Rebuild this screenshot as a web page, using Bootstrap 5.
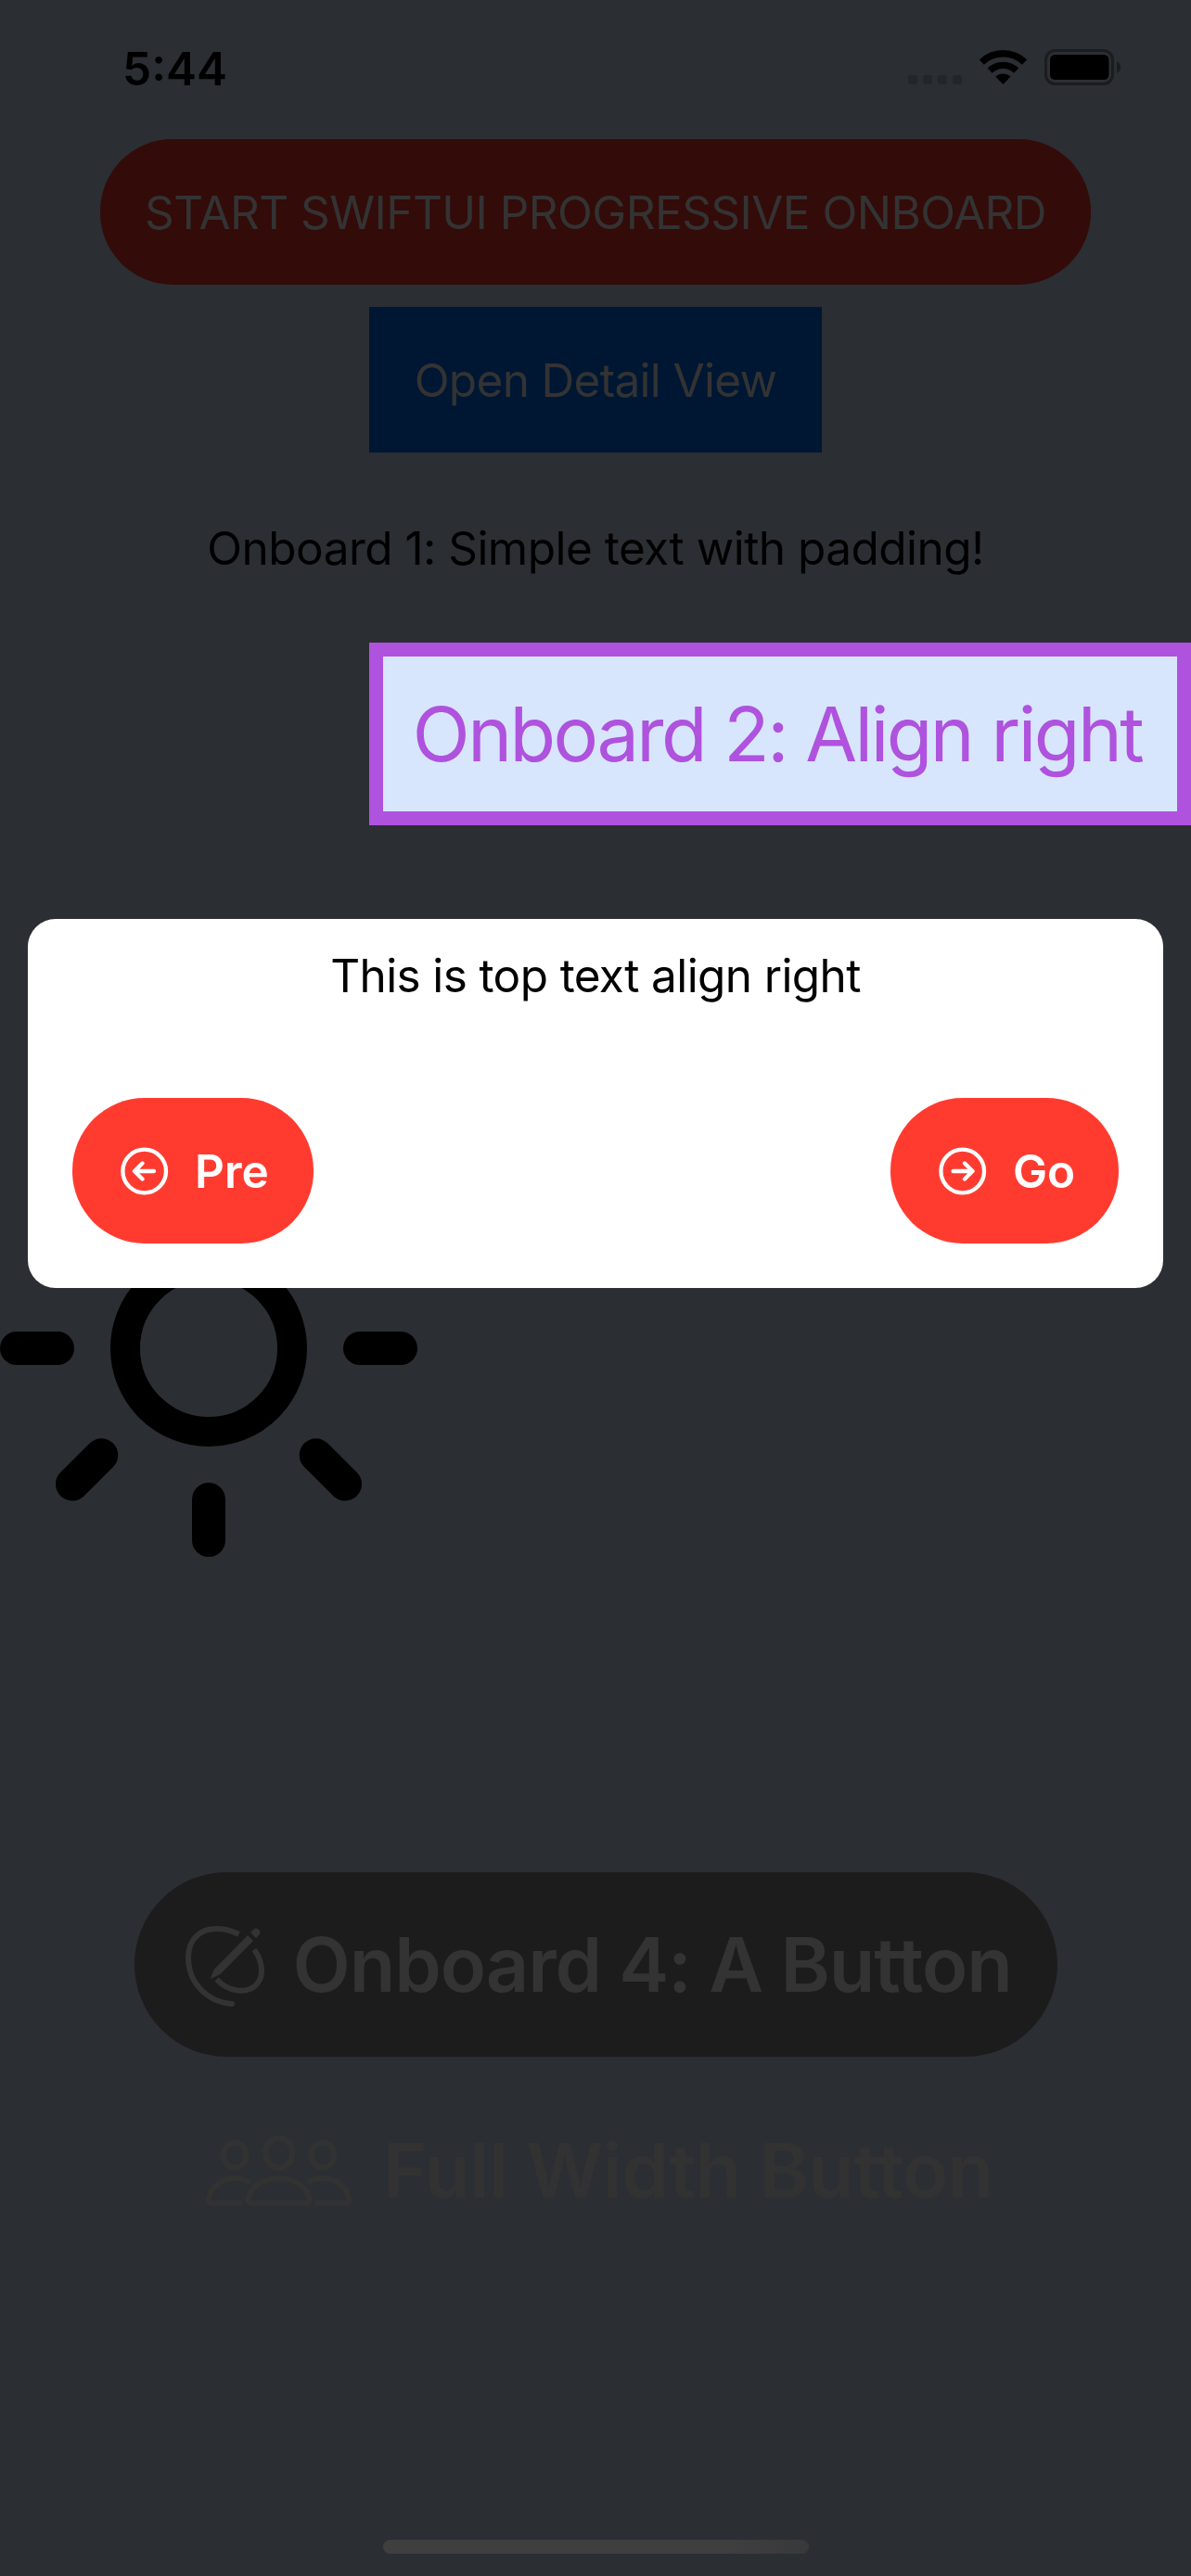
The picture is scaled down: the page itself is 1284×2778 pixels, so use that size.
<!DOCTYPE html>
<html lang="en">
<head>
<meta charset="utf-8">
<meta name="viewport" content="width=device-width, initial-scale=1">
<title>Progressive Onboard</title>
<link href="https://cdn.jsdelivr.net/npm/bootstrap@5.3.0/dist/css/bootstrap.min.css" rel="stylesheet">
<style>
body{background:#2b2e33;color:#000;font-family:Inter,"Liberation Sans",sans-serif;font-size:49.5px;line-height:60px}
.screen{width:1284px;height:2778px;overflow:hidden}
.screen svg{display:block;flex:none}
.status-row{height:150px;padding:44px 76px 46px 132px}
.clock{font-weight:600}
.signal-dots{gap:6px;margin:37px 19px 0 0}
.signal-dots i{width:10px;height:10px;border-radius:3px;background:#22262a}
.wifi{margin:10px 19px 0 0}
.battery{margin-top:9px}
.start-btn{width:1068px;height:157px;background:#330b09;color:#333;border-radius:78px;letter-spacing:-.56px}
.detail-btn{width:488px;height:157px;margin-top:24px;background:#001733;color:#333;letter-spacing:-.68px}
.simple-text{height:205px;letter-spacing:-.52px}
.align-box{width:886px;height:197px;border:15px solid #af52de;background:#d7e6fc;color:#af52de;font-size:81px;letter-spacing:-2.53px;padding-right:6px}
.sun{margin-top:339px}
.button-four{width:995px;height:199px;margin-top:340px;background:#1c1c1c;color:#333;border-radius:100px;font-size:81px;font-weight:600;padding-left:55px;letter-spacing:-1.07px}
.button-four svg{margin:5px 30px 0 0}
.button-full{height:199px;margin-top:23px;color:#333232;font-size:81px;font-weight:600;padding-left:222px;letter-spacing:-.56px}
.button-full svg{margin-right:33px}
.home-bar{width:459px;height:15px;border-radius:8px;background:linear-gradient(90deg,#3f3f40 80%,#38393b);margin-bottom:24px}
.tip{left:30px;top:991px;width:1224px;height:398px;border-radius:30px;padding:31px 48px 48px}
.tip-text{letter-spacing:-.62px}
.tip-btn{height:157px;background:#ff3b30;color:#fff;border-radius:78px;font-weight:600;padding-left:52px}
.tip-btn svg{margin-right:28px}
.prev{width:260px}
.next{width:246px}
</style>
</head>
<body>
<main class="screen position-relative d-flex flex-column align-items-center text-nowrap">
  <header class="status-row w-100 d-flex justify-content-between align-items-start">
    <span class="clock">5:44</span>
    <div class="d-flex align-items-start">
      <div class="signal-dots d-flex"><i></i><i></i><i></i><i></i></div>
      <svg class="wifi" width="51" height="37" viewBox="0 0 51 37" fill="none" stroke="#000"><path d="M2.3 13.1A33.2 33.2 0 0 1 48.5 13.1" stroke-width="7.4"/><path d="M11.1 22.2A20.6 20.6 0 0 1 39.7 22.2" stroke-width="7.2"/><path d="M25.4 37L17.4 28.7A11.5 11.5 0 0 1 33.4 28.7Z" fill="#000" stroke="none"/></svg>
      <svg class="battery" width="82" height="39" viewBox="0 0 82 39"><rect x="1.5" y="1.5" width="72" height="36" rx="10" fill="none" stroke="#1b1c1f" stroke-width="3"/><rect x="6" y="6" width="63.5" height="27" rx="5.5"/><path d="M78 13Q82 15 82 19.5Q82 24 78 26Z" fill="#1b1c1f"/></svg>
    </div>
  </header>

  <div class="start-btn d-flex align-items-center justify-content-center">START SWIFTUI PROGRESSIVE ONBOARD</div>
  <div class="detail-btn d-flex align-items-center justify-content-center">Open Detail View</div>
  <div class="simple-text d-flex align-items-center">Onboard 1: Simple text with padding!</div>
  <div class="align-box align-self-end d-flex align-items-center justify-content-center">Onboard 2: Align right</div>

  <svg class="sun align-self-start" width="450" height="450" viewBox="0 0 450 450" fill="none" stroke="#000" stroke-width="36" stroke-linecap="round"><circle cx="225" cy="225" r="90" stroke-width="32"/><path d="M18 225H62M388 225H432M225 18V62M225 388V432M109.300 109.300L78 78M340.700 109.300L372 78M109.300 340.300L78 371.500M340.700 340.300L372 371.500"/></svg>

  <div class="button-four d-flex align-items-center">
    <svg width="86" height="88" viewBox="0 0 86 88" fill="none" stroke="#333" stroke-width="6"><path d="M57.500 9C50 5 42 3 33.500 3C15 3 3 15 3 34C3 62 24 82 50 84"/><circle cx="50" cy="84" r="3" fill="#333" stroke="none"/><path d="M74 25.500C79 32 82 40 82 48.500C82 61 73 69.700 60 69.700C50 69.700 41 65.500 33.500 57.500"/><path d="M67 10L73 16L37.300 52.300L26.700 57L30.700 47ZM70 7L73 4Q76 1 79 4Q82 7 79 10L76 13Z" fill="#333" stroke="none"/></svg>
    <span>Onboard 4: A Button</span>
  </div>
  <div class="button-full w-100 d-flex align-items-center">
    <svg width="158" height="78" viewBox="0 0 158 78" fill="none" stroke="#333232" stroke-width="6"><ellipse cx="31.300" cy="22.300" rx="12.300" ry="13.500"/><ellipse cx="125.900" cy="22.300" rx="12.300" ry="13.500"/><ellipse cx="78.600" cy="19.700" rx="14.500" ry="16" stroke-width="6.500"/><path d="M45.500 70C47 58 60 47 78.600 47C97 47 110.200 58 111.700 70Q111.700 74 108 74H49.200Q45.500 74 45.500 70ZM47.500 52C42 48.500 37 47 31.300 47C15 47 4 59 3 70Q3 74 6.500 74H39M109.700 52C115.200 48.500 120.200 47 125.900 47C142.200 47 153.200 59 154.200 70Q154.200 74 150.700 74H118"/></svg>
    <span>Full Width Button</span>
  </div>
  <div class="home-bar mt-auto"></div>

  <section class="tip position-absolute bg-white d-flex flex-column justify-content-between">
    <div class="tip-text text-center">This is top text align right</div>
    <div class="d-flex justify-content-between">
      <div class="tip-btn prev d-flex align-items-center"><svg width="52" height="52" viewBox="0 0 52 52" fill="none" stroke="#fff" stroke-width="4.300" stroke-linecap="round" stroke-linejoin="round"><circle cx="25.700" cy="26" r="23.300"/><path d="M36 26H15M23.500 17.500L15 26L23.500 34.500"/></svg><span>Pre</span></div>
      <div class="tip-btn next d-flex align-items-center"><svg width="52" height="52" viewBox="0 0 52 52" fill="none" stroke="#fff" stroke-width="4.300" stroke-linecap="round" stroke-linejoin="round"><circle cx="25.700" cy="26" r="23.300"/><path d="M15.500 26H36.500M28 17.500L36.500 26L28 34.500"/></svg><span>Go</span></div>
    </div>
  </section>
</main>
<script src="https://cdn.jsdelivr.net/npm/bootstrap@5.3.0/dist/js/bootstrap.bundle.min.js"></script>
</body>
</html>
